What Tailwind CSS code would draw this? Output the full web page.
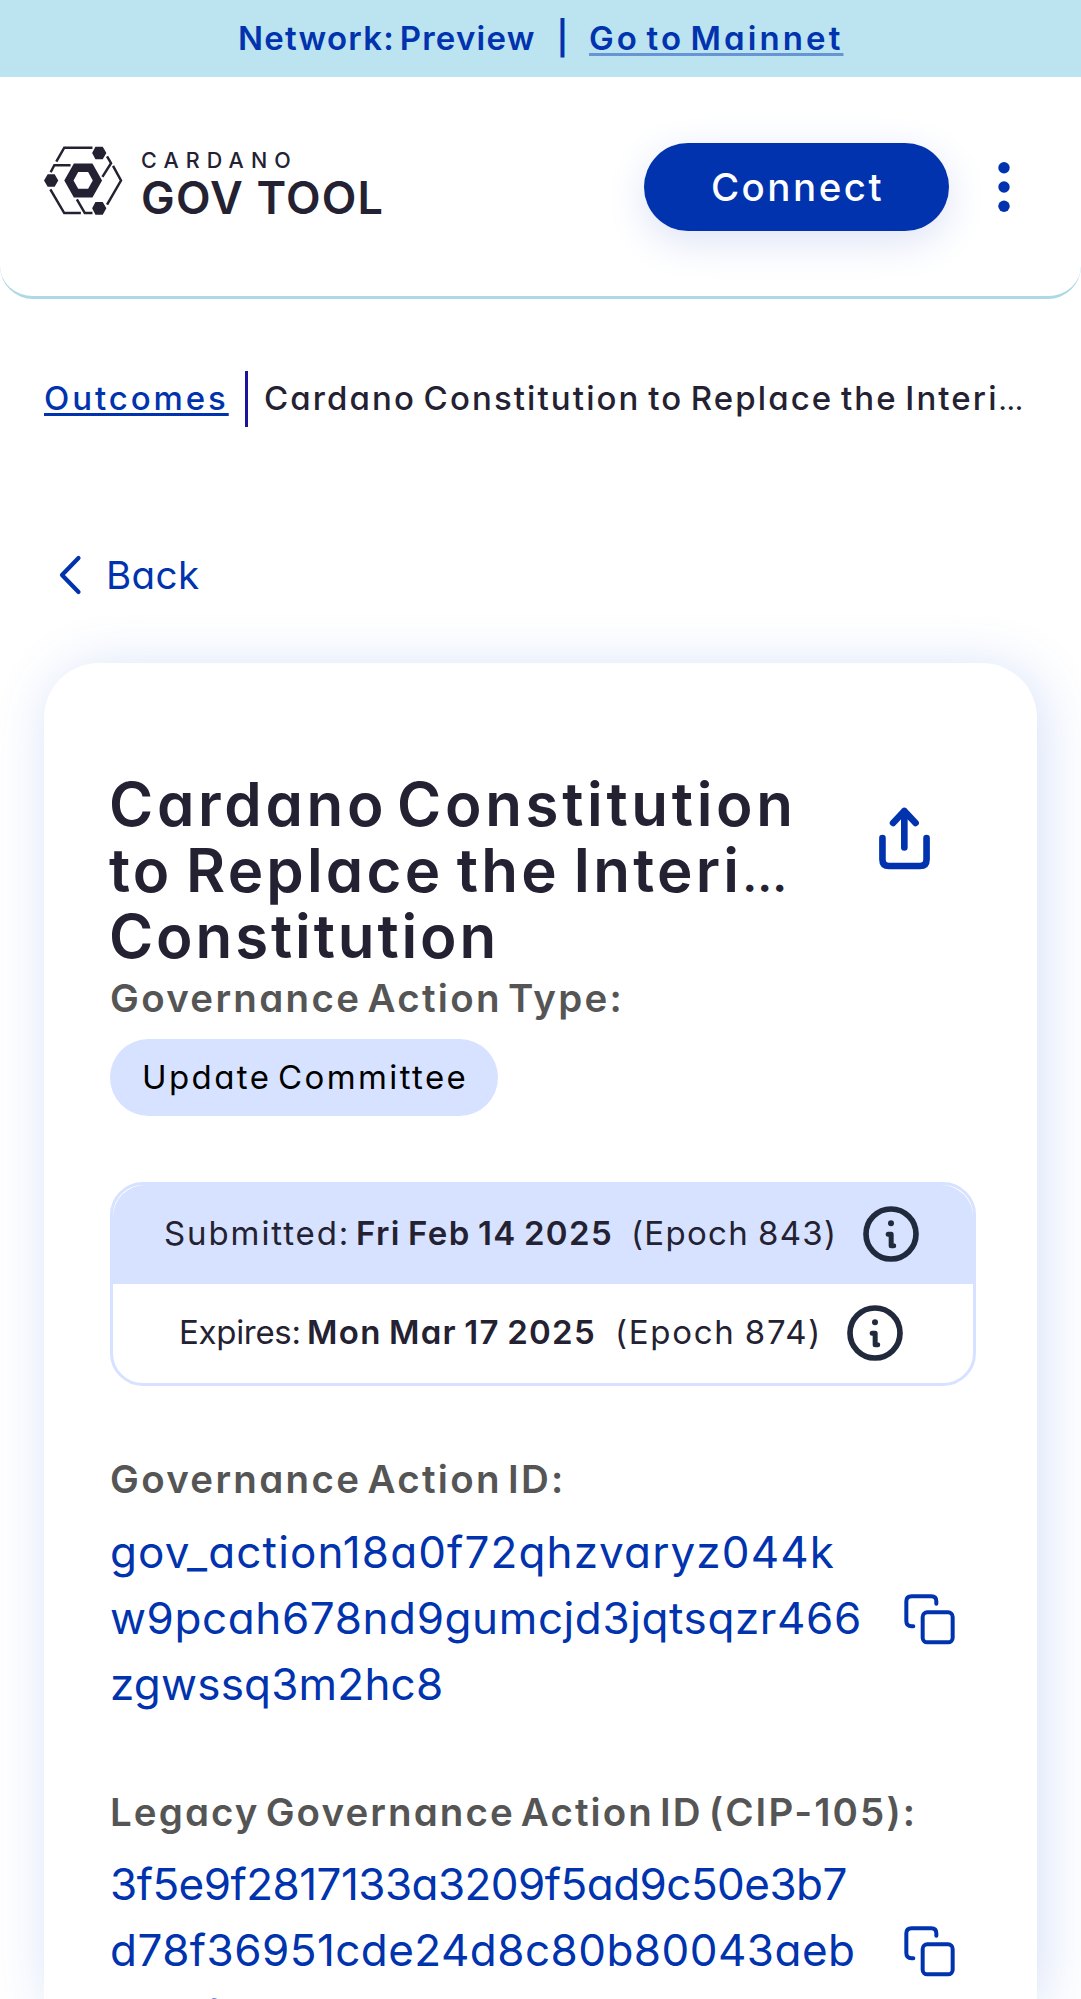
<!DOCTYPE html>
<html lang="en">
<head>
<meta charset="utf-8">
<title>Cardano GovTool</title>
<script src="https://cdn.jsdelivr.net/npm/@tailwindcss/browser@4"></script>
</head>
<body class="h-[1999px] overflow-hidden bg-white font-['Inter',sans-serif] text-[#242232] [font-feature-settings:'cv11'] [font-variation-settings:'opsz'_14] **:[word-spacing:-0.15em]">
  <div class="flex h-[77px] items-center bg-[#bce3f0] pl-[238px] text-[33px] font-semibold whitespace-nowrap text-[#0033ad]">
    <span class="w-[298px] tracking-[1.25px]">Network: Preview</span>
    <span class="w-[53px] text-center">|</span>
    <a class="tracking-[3.1px] underline decoration-[#0033ad]/45 decoration-[3px] underline-offset-[3px]">Go to Mainnet</a>
  </div>

  <header class="flex h-[222px] items-center rounded-b-[33px] border-b-[3px] border-[#add8e6] pl-[44px]">
    <div class="mb-[8px] flex w-[599.5px] gap-[18px]">
      <svg class="h-[69px] w-[79px] shrink-0" viewBox="42 46 238 208" fill="none" stroke="#242232" stroke-width="7.500">
        <path d="M79 93 103 51H188M232 77 244 98 218 139M250 106 274 150 232 223M62 125 73 104H122M61 177 103 248H153M141 207 165 248H188"/>
        <g fill="#242232" stroke="none">
          <path d="M187 67 197 48H219L230 67 219 86H197ZM187 234 197 215H219L230 234 219 253H197ZM42 150 53 131H74L85 150 74 169H53Z"/>
          <path fill-rule="evenodd" d="M103 150 132 99H188L217 150 188 201H132ZM131 150 145 175H175L189 150 175 124H145Z"/>
        </g>
      </svg>
      <div class="pt-[2px] whitespace-nowrap">
        <div class="text-[21.5px] leading-[24px] font-medium tracking-[7.1px]">CARDANO</div>
        <div class="mt-[4px] text-[45px] leading-[44px] font-semibold tracking-[1.2px] [word-spacing:0em]!">GOV TOOL</div>
      </div>
    </div>
    <button class="h-[88px] w-[305px] rounded-full bg-[#0033ad] pt-[3px] pl-[3px] text-[38.5px] font-medium tracking-[2.5px] text-white shadow-[0_11px_41px_#dde3f5]">Connect</button>
    <svg class="ml-[49px] h-[50px] w-[12px]" viewBox="0 0 12 50" fill="#0033ad"><circle cx="6" cy="5.7" r="5.7"/><circle cx="6" cy="25" r="5.7"/><circle cx="6" cy="44.3" r="5.7"/></svg>
  </header>

  <nav class="mt-[72px] flex h-[56px] items-center pl-[44px] text-[33px] font-medium whitespace-nowrap">
    <a class="w-[201px] tracking-[2.9px] text-[#0033ad] underline decoration-[3px] underline-offset-[3px]">Outcomes</a>
    <span class="h-full w-[3px] bg-[#1b139c]"></span>
    <span class="ml-[16px] tracking-[2.1px] [word-spacing:-0.1em]!">Cardano Constitution to Replace the Interi<span class="text-[27px]">…</span></span>
  </nav>

  <a class="mt-[119px] flex h-[58px] items-center pl-[58px] text-[38.5px] text-[#0033ad]">
    <svg class="h-[40px] w-[24px]" viewBox="0 0 24 40" fill="none" stroke="#0033ad" stroke-width="4.2" stroke-linecap="round" stroke-linejoin="round"><path d="M20.500 3 4 20 20.500 37"/></svg>
    <span class="ml-[24px] pt-px tracking-[0.4px]">Back</span>
  </a>

  <main class="mx-[44px] mt-[58.5px] h-[1337px] rounded-t-[55px] bg-white pt-[108px] pl-[66px] shadow-[5.5px_5.5px_55px_rgba(47,98,220,0.2)]">
    <div class="flex">
      <h1 class="-ml-[1px] w-[770px] text-[60px] leading-[66px] font-semibold whitespace-nowrap">
        <span class="block tracking-[3.7px]">Cardano Constitution</span>
        <span class="block tracking-[3.2px] [word-spacing:-0.08em]!">to Replace the Interi<span class="text-[47px] leading-none">…</span></span>
        <span class="block tracking-[2.9px]">Constitution</span>
      </h1>
      <svg class="mt-[36px] h-[63px] w-[51px]" viewBox="58 80 153 190" fill="none" stroke="#0033ad" stroke-width="20" stroke-linecap="round" stroke-linejoin="round"><path d="M68 174V238Q68 258 88 258H181Q201 258 201 238V174M134 92V202M100 128 134 92 168 128"/></svg>
    </div>

    <h2 class="mt-[5px] text-[38.5px] leading-[48px] font-semibold tracking-[2.3px] text-[#555]">Governance Action Type:</h2>
    <div class="mt-[17.5px] flex h-[77px] w-[388px] items-center rounded-full bg-[#d6e2ff] pl-[32px] text-[33px] tracking-[2.4px] whitespace-nowrap text-black">Update Committee</div>

    <div class="mt-[65.5px] h-[204px] w-[866px] rounded-[33px] border-[3px] border-[#d6e2ff] text-[33px] whitespace-nowrap">
      <div class="flex h-[99px] items-center rounded-t-[32px] bg-[#d6e2ff] pl-[51px]">
        <span class="w-[192px] tracking-[1.9px]">Submitted:</span>
        <span class="w-[275px] font-semibold tracking-[1.35px] [word-spacing:-0.07em]!">Fri Feb 14 2025</span>
        <span class="w-[231.5px] tracking-[1.3px] [word-spacing:-0.05em]!">(Epoch 843)</span>
        <svg class="size-[56px]" viewBox="69 79 168 168" fill="none" stroke="#212a3d"><circle cx="153" cy="163" r="75" stroke-width="17"/><circle cx="153" cy="131" r="9" fill="#212a3d" stroke="none"/><path d="M144.500 163.500H153.500V198H161" stroke-width="15" stroke-linecap="round" stroke-linejoin="round"/></svg>
      </div>
      <div class="flex h-[99px] items-center pl-[66px]">
        <span class="w-[128px] tracking-[-0.3px]">Expires:</span>
        <span class="w-[308px] font-semibold tracking-[1.3px] [word-spacing:-0.07em]!">Mon Mar 17 2025</span>
        <span class="w-[231.5px] tracking-[1.7px] [word-spacing:-0.05em]!">(Epoch 874)</span>
        <svg class="size-[56px]" viewBox="69 79 168 168" fill="none" stroke="#212a3d"><circle cx="153" cy="163" r="75" stroke-width="17"/><circle cx="153" cy="131" r="9" fill="#212a3d" stroke="none"/><path d="M144.500 163.500H153.500V198H161" stroke-width="15" stroke-linecap="round" stroke-linejoin="round"/></svg>
      </div>
    </div>

    <h2 class="mt-[69px] text-[38.5px] leading-[48px] font-semibold tracking-[2.3px] text-[#555]">Governance Action ID:</h2>
    <div class="mt-[16px] flex items-center">
      <div class="w-[794px] text-[44px] leading-[66px] text-[#0033ad]">
        <div class="tracking-[1.12px]">gov_action18a0f72qhzvaryz044k</div>
        <div class="tracking-[0.6px]">w9pcah678nd9gumcjd3jqtsqzr466</div>
        <div class="tracking-[0.2px]">zgwssq3m2hc8</div>
      </div>
      <svg class="mt-[4px] h-[51px] w-[51px]" viewBox="42 43 153 153" fill="none" stroke="#0033ad" stroke-width="12" stroke-linecap="round" stroke-linejoin="round"><rect x="98" y="98" width="90" height="90" rx="14"/><path d="M70 140H65Q49 140 49 124V65Q49 50 65 50H124Q139 50 139 65V72"/></svg>
    </div>

    <h2 class="mt-[71px] text-[38.5px] leading-[48px] font-semibold tracking-[2.1px] whitespace-nowrap text-[#555]">Legacy Governance Action ID (CIP-105):</h2>
    <div class="mt-[15px] flex items-center">
      <div class="w-[794px] text-[44px] leading-[66px] text-[#0033ad]">
        <div class="tracking-[-0.54px]">3f5e9f2817133a3209f5ad9c50e3b7</div>
        <div class="tracking-[0.46px]">d78f36951cde24d8c80b80043aeb</div>
        <div class="tracking-[-1px]">8c13f</div>
      </div>
      <svg class="mt-[4px] h-[51px] w-[51px]" viewBox="42 43 153 153" fill="none" stroke="#0033ad" stroke-width="12" stroke-linecap="round" stroke-linejoin="round"><rect x="98" y="98" width="90" height="90" rx="14"/><path d="M70 140H65Q49 140 49 124V65Q49 50 65 50H124Q139 50 139 65V72"/></svg>
    </div>
  </main>
</body>
</html>
